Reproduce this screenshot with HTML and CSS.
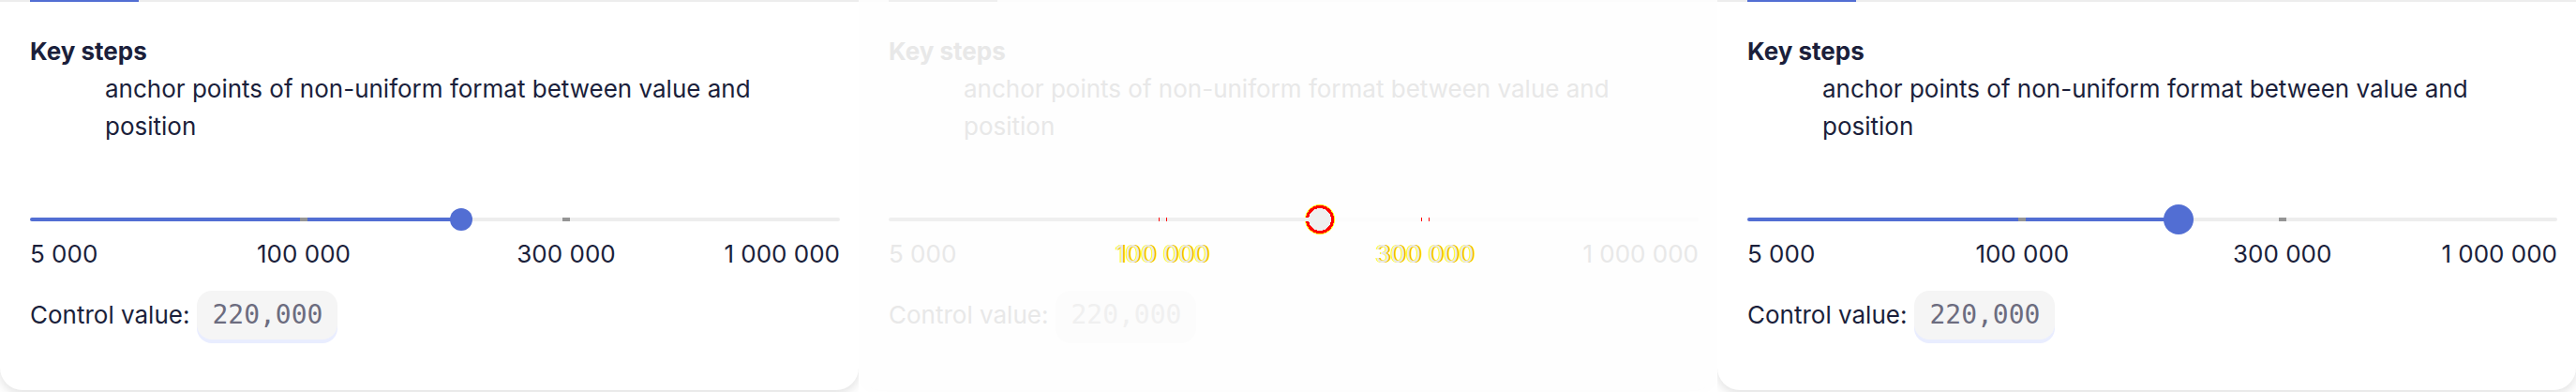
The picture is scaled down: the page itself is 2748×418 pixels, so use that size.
FILE: index.html
```html
<!DOCTYPE html>
<html lang="en">
<head>
<meta charset="utf-8">
<title>Slider key steps</title>
<link rel="stylesheet" href="styles.css">
</head>
<body>
<main class="panels">
  <section class="panel">
    <div class="card">
      <div class="tab-line"><span class="tab-active"></span></div>
      <div class="content">
        <dl class="info"><dt>Key steps</dt><dd>anchor points of non-uniform format between value and position</dd></dl>
        <div class="slider">
          <input class="range" type="range" min="0" max="300" value="160" aria-label="Amount">
          <div class="scale ticks"><span class="tick second"></span><span class="tick third"></span></div>
        </div>
        <div class="scale labels"><span class="first">5 000</span><span class="second">100 000</span><span class="third">300 000</span><span class="last">1 000 000</span></div>
        <div class="value"><label for="range-a">Control value:</label><output class="code" id="range-a">220,000</output></div>
      </div>
    </div>
  </section>
  <section class="panel diff">
    <div class="card">
      <div class="tab-line"><span class="tab-active"></span></div>
      <div class="content">
        <dl class="info"><dt>Key steps</dt><dd>anchor points of non-uniform format between value and position</dd></dl>
        <div class="slider">
          <input class="range" type="range" min="0" max="300" value="160" aria-label="Amount">
          <div class="scale ticks"><span class="tick second"></span><span class="tick third"></span></div>
        </div>
        <div class="scale labels"><span class="first">5 000</span><span class="second">100 000</span><span class="third">300 000</span><span class="last">1 000 000</span></div>
        <div class="value"><label for="range-b">Control value:</label><output class="code" id="range-b">220,000</output></div>
      </div>
    </div>
  </section>
  <section class="panel large">
    <div class="card">
      <div class="tab-line"><span class="tab-active"></span></div>
      <div class="content">
        <dl class="info"><dt>Key steps</dt><dd>anchor points of non-uniform format between value and position</dd></dl>
        <div class="slider">
          <input class="range" type="range" min="0" max="300" value="160" aria-label="Amount">
          <div class="scale ticks"><span class="tick second"></span><span class="tick third"></span></div>
        </div>
        <div class="scale labels"><span class="first">5 000</span><span class="second">100 000</span><span class="third">300 000</span><span class="last">1 000 000</span></div>
        <div class="value"><label for="range-c">Control value:</label><output class="code" id="range-c">220,000</output></div>
      </div>
    </div>
  </section>
</main>
</body>
</html>
```

FILE: styles.css
```css
* { box-sizing: border-box; }

body {
  margin: 0;
  background: #fff;
  font: 26px/40px Inter, "Liberation Sans", sans-serif;
}

.panels {
  display: grid;
  grid-template-columns: repeat(3, minmax(0, 1fr));
}

.panel {
  --text: #1b1f3b;
  --accent: #526ed3;
  --track: #ededed;
  --tick: #959595;
  --code-bg: #f5f5f5;
  --code-text: #6c6c7f;
  --code-edge: #e9edff;
  --thumb: 24px;
  --half: 12px;
  overflow: hidden;
  padding-bottom: 2px;
  color: var(--text);
}

.panel.large {
  --thumb: 32px;
  --half: 16px;
}

.panel.diff {
  --text: #e8e8e8;
  --accent: #efefef;
  --track: #fcfcfc;
  --code-bg: #fcfcfc;
  --code-text: #f0f0f0;
  --code-edge: #fcfcfc;
  --thumb: 32px;
}

.card {
  background: #fff;
  border-radius: 0 0 24px 24px;
  box-shadow: 0 4px 12px rgba(0, 0, 0, 0.12);
}

.diff .card {
  background: #fefefe;
  box-shadow: 0 4px 12px rgba(0, 0, 0, 0.01);
}

.tab-line {
  display: flex;
  height: 2px;
  padding: 0 32px;
  background: var(--track);
}

.tab-active {
  width: 116px;
  background: var(--accent);
}

.content { padding: 33px 20px 54px 32px; }

.info { margin: 0 0 63px; }

.info dt { font-weight: 700; }

.info dd { margin: 0 72px 0 80px; }

.slider { display: grid; }

.slider > * { grid-area: 1 / 1; }

.range {
  appearance: none;
  width: 100%;
  height: 32px;
  margin: 0;
  background: transparent;
}

.range::-webkit-slider-runnable-track {
  height: 4px;
  border-radius: 2px;
  background: linear-gradient(to right, var(--accent) 53%, var(--track) 53%);
}

.range::-webkit-slider-thumb {
  appearance: none;
  width: var(--thumb);
  height: var(--thumb);
  margin-top: calc(2px - var(--thumb) / 2);
  border-radius: 50%;
  background: var(--accent);
}

.diff .range::-webkit-slider-thumb {
  background:
    linear-gradient(#efefef, #efefef) left center / 4px 4px no-repeat,
    radial-gradient(circle, #efefef 12px, #f00 12px, #f00 15px, #ff0 15px);
}

.scale {
  display: grid;
  grid-template-columns: var(--half) minmax(0, 1fr) minmax(0, 2fr) minmax(0, 2fr) minmax(0, 1fr) var(--half);
  white-space: nowrap;
}

.labels { padding-top: 1px; }

.first { grid-column: 1 / 3; }
.second { grid-column: 3; justify-self: center; }
.third { grid-column: 4; justify-self: center; }
.last { grid-column: 5 / 7; justify-self: end; }

.ticks {
  align-items: center;
  pointer-events: none;
}

.tick {
  width: 8px;
  height: 4px;
  background: var(--tick);
}

.diff .tick {
  width: 9px;
  border: solid #f00;
  border-width: 0 1px;
  background: transparent;
}

.diff .labels .second,
.diff .labels .third {
  text-shadow: 1px 0 rgba(255, 0, 0, 0.4), -1px 0 #ff0, 1px 0 #ff0, 2px 0 #ff0;
}

.value {
  display: flex;
  align-items: center;
  gap: 8px;
  margin-top: 19px;
}

.code {
  padding: 6px 16px;
  border-radius: 16px;
  background: var(--code-bg);
  box-shadow: 0 4px var(--code-edge);
  color: var(--code-text);
  font-family: "DejaVu Sans Mono", monospace;
  font-size: 28px;
}
```
